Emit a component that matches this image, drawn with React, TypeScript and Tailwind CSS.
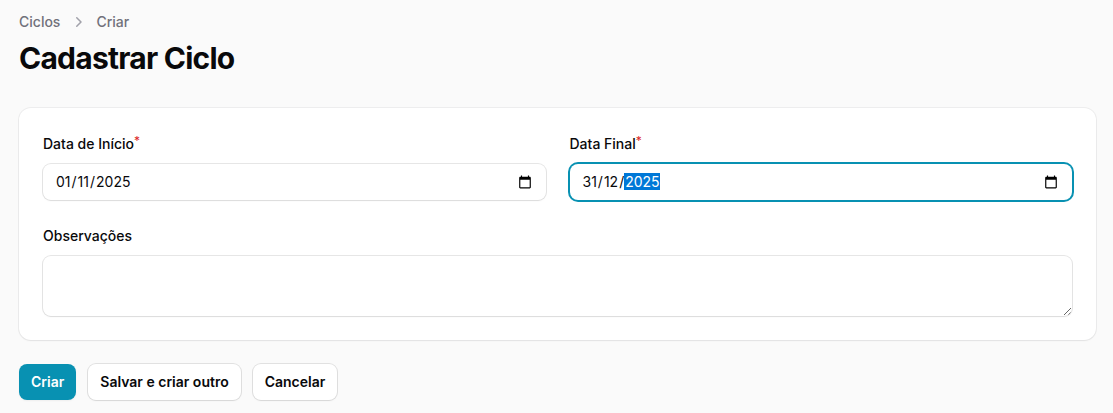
import type { ReactNode } from 'react';

function CalendarIcon() {
  return (
    <svg viewBox="0 0 24 24" className="size-[14px] shrink-0" fill="#000">
      <path d="M20 3h-1V1h-2v2H7V1H5v2H4c-1.1 0-2 .9-2 2v16c0 1.1.9 2 2 2h16c1.1 0 2-.9 2-2V5c0-1.1-.9-2-2-2zm0 18H4V8h16v13z" />
    </svg>
  );
}

function Label({ children, required }: { children: ReactNode; required?: boolean }) {
  return (
    <div className="flex h-6 items-center text-sm leading-6 font-medium text-[#09090b]">
      <span>
        {children}
        {required && <sup className="-top-1 text-[12px] font-normal text-[#dc2626]">*</sup>}
      </span>
    </div>
  );
}

type DateFieldProps = {
  label: string;
  day: string;
  month: string;
  year: string;
  focused?: boolean;
};

function DateField({ label, day, month, year, focused }: DateFieldProps) {
  return (
    <div className="grid gap-2">
      <Label required>{label}</Label>
      <div
        className={`flex h-9 items-center justify-between rounded-lg bg-white pr-[14px] pl-3 text-sm text-[#09090b] shadow-xs ${
          focused ? 'ring-2 ring-[#0891b2]' : 'ring-1 ring-[#09090b]/10'
        }`}
      >
        <div className="flex pb-px leading-[17px]">
          <span className="px-px">{day}</span>
          <span>/</span>
          <span className="px-px">{month}</span>
          <span>/</span>
          <span className={focused ? 'bg-[#0078d7] pl-px text-white' : 'px-px'}>{year}</span>
        </div>
        <CalendarIcon />
      </div>
    </div>
  );
}

function Button({ children, primary }: { children: ReactNode; primary?: boolean }) {
  return (
    <button
      type="button"
      className={`h-9 rounded-lg px-3 text-sm font-semibold shadow-xs ${
        primary ? 'bg-[#0891b2] text-white' : 'bg-white text-[#09090b] ring-1 ring-[#09090b]/10'
      }`}
    >
      {children}
    </button>
  );
}

export default function App() {
  return (
    <main className="min-h-screen bg-[#fafafa] pt-3 pr-[17px] pl-[19px] font-['Inter',sans-serif]">
      <nav className="flex h-5 items-center gap-2 text-sm font-medium text-[#71717a]">
        <span>Ciclos</span>
        <svg viewBox="0 0 20 20" fill="#a1a1aa" className="size-5">
          <path
            fillRule="evenodd"
            clipRule="evenodd"
            d="M8.22 5.22a.75.75 0 0 1 1.06 0l4.25 4.25a.75.75 0 0 1 0 1.06l-4.25 4.25a.75.75 0 0 1-1.06-1.06L11.94 10 8.22 6.28a.75.75 0 0 1 0-1.06Z"
          />
        </svg>
        <span>Criar</span>
      </nav>
      <h1 className="mt-2 text-3xl leading-9 font-bold tracking-tight text-[#09090b]">Cadastrar Ciclo</h1>

      <section className="mt-8 grid grid-cols-2 gap-6 rounded-xl bg-white p-6 shadow-xs ring-1 ring-[#09090b]/5">
        <DateField label="Data de Início" day="01" month="11" year="2025" />
        <DateField label="Data Final" day="31" month="12" year="2025" focused />
        <div className="col-span-2 grid gap-2">
          <Label>Observações</Label>
          <div className="flex h-[60px] overflow-hidden rounded-lg bg-white shadow-xs ring-1 ring-[#09090b]/10">
            <textarea aria-label="Observações" className="h-full w-full resize-y px-3 py-1.5 text-sm outline-none" />
          </div>
        </div>
      </section>

      <div className="mt-6 flex gap-3">
        <Button primary>Criar</Button>
        <Button>Salvar e criar outro</Button>
        <Button>Cancelar</Button>
      </div>
    </main>
  );
}
